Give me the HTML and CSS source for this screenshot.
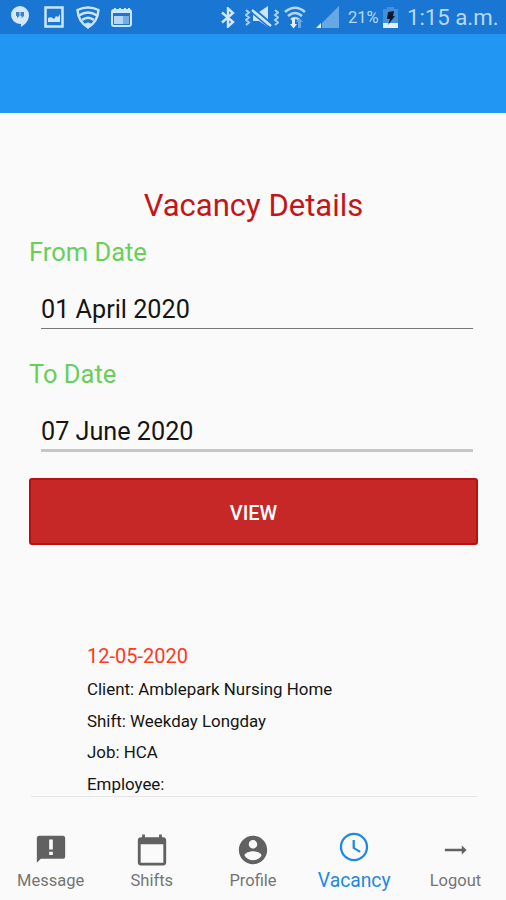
FILE: index.html
```html
<!DOCTYPE html>
<html lang="en">

<head>
    <meta charset="UTF-8">
    <meta name="viewport" content="width=device-width, initial-scale=1.0">
    <title>Vacancy Details</title>
    <link rel="stylesheet" href="styles.css">
</head>

<body>
    <div class="status-bar">
        <div class="notifications">
            <svg width="18" height="22" viewBox="0 0 18 22">
                <path fill="#d5e8fb" d="M9 0a9 9 0 0 1 9 9c0 5-3 9-8 12v-3H9A9 9 0 0 1 9 0z"/>
                <path fill="#3d82cb" d="M5 6h3.500v4L6 12v-2H5zM9.500 6H13v4l-2.500 2v-2h-1z"/>
            </svg>
            <svg class="picture" width="20" height="22" viewBox="0 0 20 22">
                <path fill="none" stroke="#cfe5fa" stroke-width="2.500" d="M1.500 1.500h17v19h-17z"/>
                <path fill="#cfe5fa" d="M4 16v-4l3-1 3 2 2-3 2 1 2-3v8z"/>
            </svg>
            <svg class="shield" width="24" height="23" viewBox="0 0 24 23" fill="none" stroke="#cfe5fa" stroke-width="2.400">
                <path d="M1.500 4Q12-1 22.500 4C22 12 18 18 12 21.500 6 18 2 12 1.500 4z"/>
                <path d="M3 9.500q9-6 18 0M6 14q6-4.500 12 0"/>
                <path fill="#cfe5fa" stroke="none" d="M8.500 18q3.500-3 7 0L12 21z"/>
            </svg>
            <svg class="news" width="21" height="20" viewBox="0 0 21 20">
                <rect x="1" y="3" width="19" height="16" rx="2" fill="none" stroke="#cfe5fa" stroke-width="2"/>
                <path fill="#cfe5fa" d="M1 3h19v3H1zM3 1h2v2H3zM8 1h2v2H8zM13 1h2v2h-2zM17 1h2v2h-2z"/>
                <path fill="#b4d5f5" d="M3 9h9v8H3z"/>
                <path fill="#71aee9" d="M12 9h6v8h-6z"/>
            </svg>
        </div>
        <div class="system">
            <svg class="bluetooth" width="14" height="21" viewBox="0 0 14 21">
                <path fill="none" stroke="#d5e8fb" stroke-width="2.400" d="M1 5.500l11 9.500-5 4.500v-18L12 6 1 15.500"/>
            </svg>
            <svg class="mute" width="34" height="22" viewBox="0 0 34 22">
                <path fill="#cfe5fa" d="M8 6h6l9-6v21l-9-6H8z"/>
                <path stroke="#1976d2" stroke-width="2" d="M8 2l19 16"/>
                <path stroke="#cfe5fa" stroke-width="2.400" d="M7 4l19 16"/>
                <path stroke="#1976d2" stroke-width="1.500" d="M6 6l19 16"/>
                <path fill="none" stroke="#a9cff4" stroke-width="2" d="M1 4l3 2.500L1 9l3 2.500L1 14l3 2.500L1 19M30 4l3 2.500L30 9l3 2.500-3 2.500 3 2.500-3 2.500"/>
            </svg>
            <svg class="wifi" width="22" height="23" viewBox="0 0 22 23">
                <path fill="none" stroke="#b5d6f6" stroke-width="2.600" d="M1 6q10-8.500 20 0M4 10q7-6 14 0M7 13.500q4-3 8 0"/>
                <path fill="#e1effd" d="M8 12h3v6h2l-3.500 4.500L6 18h2z"/>
                <path fill="#66a8e8" d="M14 22v-6h-2l3.500-4L19 16h-2v6z"/>
            </svg>
            <svg class="signal" width="23" height="22" viewBox="0 0 23 22">
                <path fill="#66a8e5" d="M23 0v22H6v-5z"/>
                <path fill="#e1effd" d="M5 17v5H0z"/>
            </svg>
            <span class="percent">21%</span>
            <svg class="battery" width="15" height="21" viewBox="0 0 15 21">
                <path fill="#458fd8" d="M4 0h7v2h4v14H0V2h4z"/>
                <path fill="#e3f0fc" d="M0 16h15v5H0z"/>
                <path fill="#071a2d" d="M5 5l6-1-1 5h2l-7 9 2-6H4z"/>
            </svg>
            <span class="clock">1:15 a.m.</span>
        </div>
    </div>

    <header class="app-bar"></header>

    <main class="content">
        <h1>Vacancy Details</h1>
        <form class="search">
            <label for="from">From Date</label>
            <input class="date" type="text" name="from" id="from" value="01 April 2020">
            <label for="to">To Date</label>
            <input class="date date-light" type="text" name="to" id="to" value="07 June 2020">
            <button class="btn-view" type="button">VIEW</button>
        </form>

        <div class="vacancy">
            <div class="vacancy-date">12-05-2020</div>
            <div>Client: Amblepark Nursing Home</div>
            <div>Shift: Weekday Longday</div>
            <div>Job: HCA</div>
            <div>Employee:</div>
        </div>
    </main>

    <nav class="tabs">
        <a class="tab">
            <svg width="34" height="34" viewBox="0 0 24 24">
                <path d="M20.500 2h-17C2.700 2 2 2.700 2 3.500V21l2.800-2.800h15.700c.8 0 1.500-.7 1.500-1.500V3.500c0-.8-.7-1.500-1.500-1.500zM13.300 15.500h-2.600v-2.300h2.600v2.300zm0-3.800h-2.600V4.500h2.600v7.200z"/>
            </svg>
            <span>Message</span>
        </a>
        <a class="tab">
            <svg width="34" height="34" viewBox="0 0 24 24">
                <path d="M20 3h-1V1h-2v2H7V1H5v2H4c-1.100 0-2 .9-2 2v16c0 1.100.9 2 2 2h16c1.100 0 2-.9 2-2V5c0-1.100-.9-2-2-2zm0 18H4V8h16v13z"/>
            </svg>
            <span>Shifts</span>
        </a>
        <a class="tab">
            <svg width="34" height="34" viewBox="0 0 24 24">
                <path d="M12 2C6.480 2 2 6.480 2 12s4.480 10 10 10 10-4.480 10-10S17.520 2 12 2zm0 3c1.660 0 3 1.340 3 3s-1.340 3-3 3-3-1.340-3-3 1.340-3 3-3zm0 14.200c-2.500 0-4.710-1.280-6-3.220.03-1.990 4-3.080 6-3.080 1.990 0 5.970 1.090 6 3.080-1.290 1.940-3.500 3.220-6 3.220z"/>
            </svg>
            <span>Profile</span>
        </a>
        <a class="tab active">
            <svg width="34" height="34" viewBox="0 0 24 24">
                <path d="M11.990 2C6.470 2 2 6.480 2 12s4.470 10 9.990 10C17.520 22 22 17.520 22 12S17.520 2 11.990 2zM12 20.400c-4.640 0-8.400-3.760-8.400-8.400S7.360 3.600 12 3.600s8.400 3.760 8.400 8.400-3.760 8.400-8.400 8.400zM12.600 7H11v6l5 3.100.75-1.230-4.150-2.530z"/>
            </svg>
            <span>Vacancy</span>
        </a>
        <a class="tab">
            <svg width="34" height="34" viewBox="0 0 24 24">
                <path d="M4.800 11.200h12V8.800l3.400 3.200-3.400 3.200v-2.400h-12z"/>
            </svg>
            <span>Logout</span>
        </a>
    </nav>
</body>

</html>
```
FILE: styles.css
```css
* {
    box-sizing: border-box;
}

body {
    margin: 0;
    height: 900px;
    display: flex;
    flex-direction: column;
    overflow: hidden;
    background: #fafafa;
    color: #151515;
    font-family: Roboto, "Liberation Sans", sans-serif;
}

.status-bar {
    height: 34px;
    padding: 0 9px 0 11px;
    display: flex;
    justify-content: space-between;
    align-items: center;
    background: #1976d2;
    color: #b9d8f6;
}

.notifications,
.system {
    display: flex;
    align-items: center;
}

.picture {
    margin-left: 15px;
}

.shield {
    margin-left: 12px;
}

.news {
    margin-left: 11px;
}

.mute {
    margin-left: 10px;
}

.wifi {
    margin-left: 5px;
}

.signal {
    margin-left: 10px;
}

.percent {
    width: 32px;
    margin-left: 9px;
    font-size: 16.5px;
    white-space: nowrap;
}

.battery {
    margin-left: 3px;
}

.clock {
    width: 90px;
    margin-left: 9px;
    font-size: 22.2px;
    line-height: 34px;
    white-space: nowrap;
}

.app-bar {
    height: 79px;
    background: #2196f3;
}

.content {
    flex: 1;
    padding: 74px 28px 0 29px;
}

h1 {
    margin: 0;
    font-size: 31px;
    font-weight: 400;
    line-height: 38px;
    text-align: center;
    color: #c41519;
}

.search {
    display: flex;
    flex-direction: column;
}

.search label {
    padding-top: 13px;
    line-height: 29px;
    font-size: 25.5px;
    color: #68cf5b;
}

.date {
    height: 62px;
    margin: 0 5px 18px 12px;
    padding: 24px 0 0;
    border: none;
    border-bottom: 1px solid #777;
    background: none;
    font: 25.2px Roboto, "Liberation Sans", sans-serif;
    color: #151515;
}

.date-light {
    height: 63px;
    padding-top: 25px;
    border-bottom: 3px solid #c6c6c6;
}

.btn-view {
    height: 67px;
    margin-top: 8px;
    padding-top: 3px;
    border: 2px solid #b90f12;
    border-radius: 3px;
    background: #c62828;
    color: #fff;
    font: 500 20px Roboto, "Liberation Sans", sans-serif;
}

.vacancy {
    height: 157px;
    margin: 95px 1px 0 2px;
    padding-left: 56px;
    border-bottom: 1px solid #e6e6e6;
    font-size: 16.9px;
    line-height: 31.7px;
    white-space: nowrap;
}

.vacancy-date {
    padding-bottom: 2px;
    font-size: 20px;
    line-height: 32px;
    color: #fb3b1c;
}

.tabs {
    height: 84px;
    display: flex;
}

.tab {
    flex: 1;
    padding-top: 17px;
    display: flex;
    flex-direction: column;
    align-items: center;
    font-size: 16.5px;
    line-height: 28px;
    color: #757575;
}

.tab svg {
    fill: #616161;
}

.tab.active {
    padding-top: 14px;
    font-size: 19.3px;
    line-height: 33px;
    color: #1e88e5;
}

.tab.active svg {
    fill: #1e88e5;
}
```
